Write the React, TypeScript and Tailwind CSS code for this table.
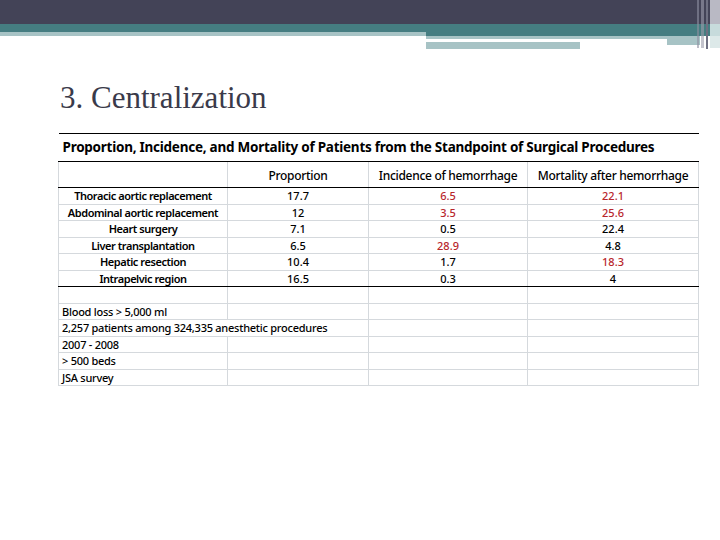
const rows = [
  { name: "Thoracic aortic replacement", p: "17.7", inc: "6.5", mort: "22.1", incRed: true, mortRed: true },
  { name: "Abdominal aortic replacement", p: "12", inc: "3.5", mort: "25.6", incRed: true, mortRed: true },
  { name: "Heart surgery", p: "7.1", inc: "0.5", mort: "22.4", incRed: false, mortRed: false },
  { name: "Liver transplantation", p: "6.5", inc: "28.9", mort: "4.8", incRed: true, mortRed: false },
  { name: "Hepatic resection", p: "10.4", inc: "1.7", mort: "18.3", incRed: false, mortRed: true },
  { name: "Intrapelvic region", p: "16.5", inc: "0.3", mort: "4", incRed: false, mortRed: false },
];

const notes = ["Blood loss > 5,000 ml", "2,257 patients among 324,335 anesthetic procedures", "2007 - 2008", "> 500 beds", "JSA survey"];

function HeaderBand() {
  // slide theme decoration
  return (
    <svg width="720" height="50" viewBox="0 0 720 50" className="block">
      <rect x="0" y="0" width="720" height="24" fill="#434357" />
      <rect x="0" y="24" width="720" height="8" fill="#457d81" />
      <rect x="0" y="32" width="426" height="4" fill="#a7c3c5" />
      <rect x="426" y="32" width="294" height="4" fill="#457d81" />
      <rect x="426" y="36" width="274" height="3" fill="#a7c3c5" />
      <rect x="580" y="39" width="120" height="3" fill="#a7c3c5" />
      <rect x="426" y="42" width="154" height="7" fill="#a7c3c5" />
      <rect x="667" y="42" width="33" height="3" fill="#a7c3c5" />
      <rect x="426" y="39" width="241" height="3" fill="#ffffff" />
      <rect x="580" y="42" width="87" height="3" fill="#ffffff" />
      <rect x="697" y="0" width="2" height="48" fill="#8e8fa0" opacity="0.6" />
      <rect x="701" y="0" width="3" height="48" fill="#9c9dac" opacity="0.6" />
      <rect x="706" y="0" width="2" height="49" fill="#6f7082" />
      <rect x="710" y="0" width="10" height="24" fill="#b9b9c4" />
      <rect x="710" y="24" width="10" height="12" fill="#c7dbdc" />
      <rect x="710" y="36" width="10" height="12" fill="#dde9e9" />
    </svg>
  );
}

export default function App() {
  const red = "text-[#b8262c]";
  const cell = "border border-[#d5d9dd] p-0 text-center";
  return (
    <div className="w-[720px] h-[540px] bg-white overflow-hidden" style={{ fontFamily: '"Noto Sans", sans-serif' }}>
      <HeaderBand />

      <h1 className="mt-[31px] ml-[60px] text-[31px] leading-[34px] text-[#3a3a4a]" style={{ fontFamily: '"Liberation Serif", serif' }}>
        3. Centralization
      </h1>

      <table className="ml-[58px] mt-[18px] border-collapse table-fixed w-[640px] text-[11px] text-black">
        <colgroup>
          <col className="w-[169px]" />
          <col className="w-[141px]" />
          <col className="w-[159px]" />
          <col className="w-[171px]" />
        </colgroup>
        <tbody>
          <tr className="h-[28px]">
            <td colSpan={4} className="border-t border-b border-black px-[4px] text-left text-[13.5px] font-bold tracking-[-0.25px] whitespace-nowrap">
              Proportion, Incidence, and Mortality of Patients from the Standpoint of Surgical Procedures
            </td>
          </tr>
          <tr className="h-[26px] text-[12px] font-medium tracking-[-0.3px] leading-[22px]">
            <td className="border-x border-[#d5d9dd] border-b border-b-black"></td>
            <td className="border-x border-[#d5d9dd] border-b border-b-black text-center pt-[3px]">Proportion</td>
            <td className="border-x border-[#d5d9dd] border-b border-b-black text-center pt-[3px]">Incidence of hemorrhage</td>
            <td className="border-x border-[#d5d9dd] border-b border-b-black text-center pt-[3px]">Mortality after hemorrhage</td>
          </tr>
          {rows.map((r, i) => {
            const last = i === rows.length - 1 ? " border-b-black" : "";
            return (
              <tr key={r.name} className="h-[16.5px] leading-[15px]">
                <td className={cell + last + " font-semibold tracking-[-0.45px]"}>{r.name}</td>
                <td className={cell + last + " font-medium"}>{r.p}</td>
                <td className={cell + last + " font-medium " + (r.incRed ? red : "")}>{r.inc}</td>
                <td className={cell + last + " font-medium " + (r.mortRed ? red : "")}>{r.mort}</td>
              </tr>
            );
          })}
          <tr className="h-[16.5px]">
            <td className={cell}></td>
            <td className={cell}></td>
            <td className={cell}></td>
            <td className={cell}></td>
          </tr>
          {notes.map((n, i) =>
            i === 1 ? (
              <tr key={n} className="h-[16.5px] leading-[15px]">
                <td colSpan={2} className="border border-[#d5d9dd] px-[3px] text-left font-medium tracking-[-0.25px] whitespace-nowrap">{n}</td>
                <td className={cell}></td>
                <td className={cell}></td>
              </tr>
            ) : (
              <tr key={n} className="h-[16.5px] leading-[15px]">
                <td className="border border-[#d5d9dd] px-[3px] text-left font-medium tracking-[-0.25px] whitespace-nowrap">{n}</td>
                <td className={cell}></td>
                <td className={cell}></td>
                <td className={cell}></td>
              </tr>
            )
          )}
        </tbody>
      </table>
    </div>
  );
}
